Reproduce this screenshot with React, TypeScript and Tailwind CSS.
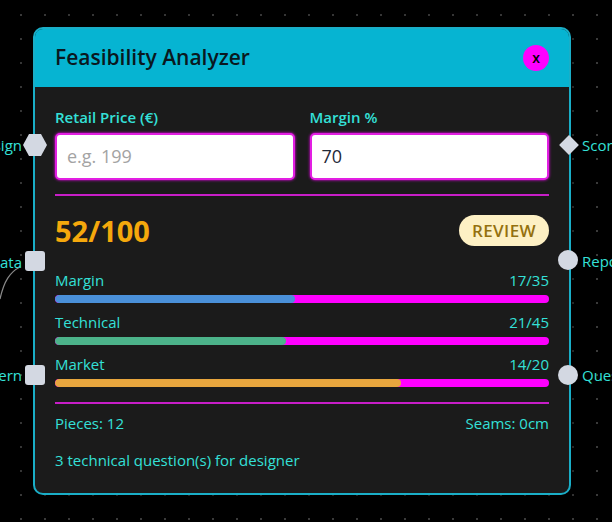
const font = { fontFamily: '"Open Sans", "Noto Sans", sans-serif' };

const bars = [
  { label: 'Margin', value: 17, max: 35, color: 'bg-[#4a90d9]' },
  { label: 'Technical', value: 21, max: 45, color: 'bg-[#4cb38a]' },
  { label: 'Market', value: 14, max: 20, color: 'bg-[#e8a63e]' },
];

function ScoreBar({ label, value, max, color }: { label: string; value: number; max: number; color: string }) {
  return (
    <div>
      <div className="flex justify-between text-[15px] leading-5 text-[#34e0d8] mb-[5px]">
        <span>{label}</span>
        <span>
          {value}/{max}
        </span>
      </div>
      <div className="h-2 rounded-full bg-[#ff00ff] overflow-hidden">
        <div className={`h-full rounded-full ${color}`} style={{ width: `${(value / max) * 100}%` }} />
      </div>
    </div>
  );
}

export default function App() {
  return (
    <div
      className="relative w-[612px] h-[522px] overflow-hidden bg-black bg-[radial-gradient(#3a3a3a_1px,transparent_1.2px)] bg-[size:24px_24px] bg-[position:9px_3px]"
      style={font}
    >
      {/* incoming edge */}
      <svg className="absolute left-0 top-[255px]" width="30" height="60">
        <path d="M0 44 C4 26 10 17 20 12" stroke="#8a8a8a" strokeWidth="1.2" fill="none" />
      </svg>

      {/* node */}
      <div className="absolute left-[33px] top-[27px] w-[538px] rounded-[10px] border-2 border-[#1aaec7] bg-[#1b1b1b] shadow-[0_0_18px_rgba(0,0,0,0.8)]">
        <div className="h-[58px] rounded-t-[8px] bg-[#06b4d2] px-5 flex items-center justify-between">
          <span className="text-[21px] font-semibold text-[#0a1820]">Feasibility Analyzer</span>
          <button className="w-[26px] h-[26px] rounded-full bg-[#ff00ff] text-black text-[14px] font-semibold leading-none flex items-center justify-center">
            x
          </button>
        </div>

        <div className="px-5 pt-5 pb-[23px]">
          <div className="grid grid-cols-2 gap-[15px]">
            <div>
              <div className="text-[15px] leading-5 font-semibold text-[#34e0d8] mb-[6px]">Retail Price (€)</div>
              <div className="h-[47px] rounded-[5px] border-2 border-[#e21ee2] bg-white px-[10px] flex items-center text-[18px] text-[#a3a3a3] shadow-[0_0_3px_#ff00ff]">
                e.g. 199
              </div>
            </div>
            <div>
              <div className="text-[15px] leading-5 font-semibold text-[#34e0d8] mb-[6px]">Margin %</div>
              <div className="h-[47px] rounded-[5px] border-2 border-[#e21ee2] bg-white px-[10px] flex items-center text-[18px] text-[#1f2937] shadow-[0_0_3px_#ff00ff]">
                70
              </div>
            </div>
          </div>

          <div className="mt-[14px] h-[2px] bg-[#c81ec8]" />

          <div className="mt-[19px] h-[31px] flex items-center justify-between">
            <span className="text-[29px] font-bold text-[#f5a80c] leading-none">52/100</span>
            <span className="h-[31px] px-[13px] rounded-full bg-[#fdf0c4] text-[#94700f] text-[17px] font-semibold flex items-center tracking-[0.4px]">
              REVIEW
            </span>
          </div>

          <div className="mt-[24px] flex flex-col gap-[9px]">
            {bars.map((b) => (
              <ScoreBar key={b.label} {...b} />
            ))}
          </div>

          <div className="mt-[15px] h-[2px] bg-[#c81ec8]" />

          <div className="mt-[9px] flex justify-between text-[15px] leading-5 text-[#34e0d8]">
            <span>Pieces: 12</span>
            <span>Seams: 0cm</span>
          </div>
          <div className="mt-[17px] text-[15px] leading-5 text-[#34e0d8]">3 technical question(s) for designer</div>
        </div>
      </div>

      {/* left handles */}
      <span className="absolute right-[590px] top-[135px] text-[15px] leading-5 text-[#34e0d8]">Design</span>
      <svg className="absolute left-[23px] top-[134px]" width="24" height="22" viewBox="0 0 24 22">
        <polygon points="6,0 18,0 24,11 18,22 6,22 0,11" fill="#d3d8e2" />
      </svg>
      <span className="absolute right-[590px] top-[252px] text-[15px] leading-5 text-[#34e0d8]">Data</span>
      <div className="absolute left-[25px] top-[251px] w-5 h-5 rounded-[3px] bg-[#d3d8e2]" />
      <span className="absolute right-[590px] top-[365px] text-[15px] leading-5 text-[#34e0d8]">Pattern</span>
      <div className="absolute left-[25px] top-[365px] w-5 h-5 rounded-[3px] bg-[#d3d8e2]" />

      {/* right handles */}
      <div className="absolute left-[562px] top-[138px] w-[14px] h-[14px] rotate-45 bg-[#d3d8e2]" />
      <span className="absolute left-[582px] top-[135px] text-[15px] leading-5 text-[#34e0d8] whitespace-nowrap">Score</span>
      <div className="absolute left-[558px] top-[250px] w-5 h-5 rounded-full bg-[#d3d8e2]" />
      <span className="absolute left-[582px] top-[251px] text-[15px] leading-5 text-[#34e0d8] whitespace-nowrap">Report</span>
      <div className="absolute left-[558px] top-[365px] w-5 h-5 rounded-full bg-[#d3d8e2]" />
      <span className="absolute left-[582px] top-[365px] text-[15px] leading-5 text-[#34e0d8] whitespace-nowrap">Questions</span>
    </div>
  );
}
